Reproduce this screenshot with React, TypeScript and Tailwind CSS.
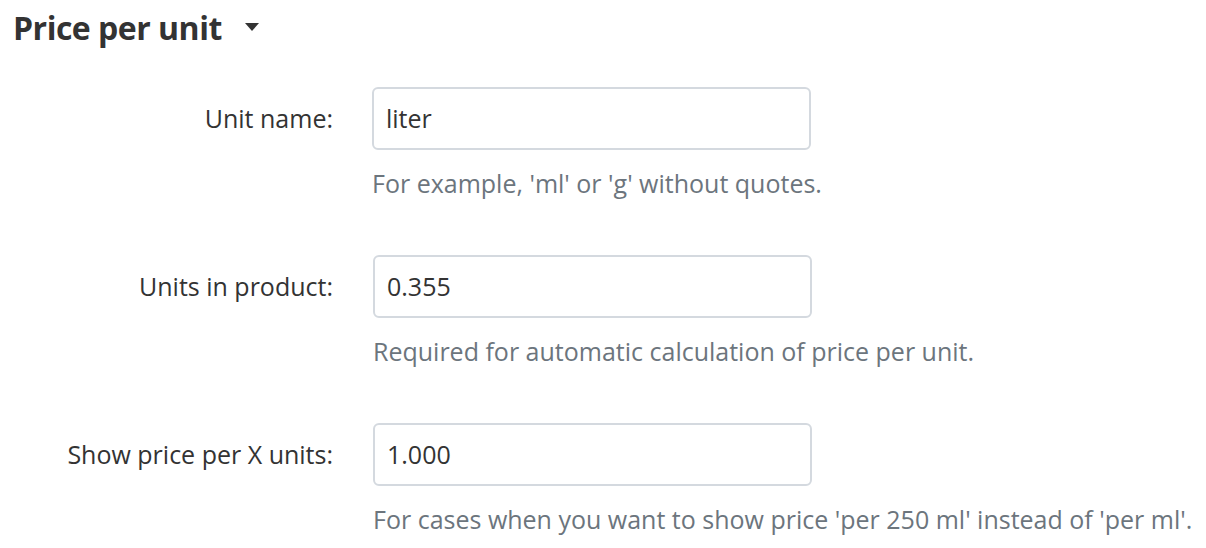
import React from "react";

const rows = [
  { label: "Unit name:", value: "liter", help: "For example, 'ml' or 'g' without quotes." },
  { label: "Units in product:", value: "0.355", help: "Required for automatic calculation of price per unit." },
  { label: "Show price per X units:", value: "1.000", help: "For cases when you want to show price 'per 250 ml' instead of 'per ml'." },
];

export default function App() {
  return (
    <div className="w-[1206px] h-[548px] bg-white overflow-hidden" style={{ fontFamily: "'Open Sans', 'Noto Sans', sans-serif" }}>
      <div className="pl-[13px] pt-[10px] flex items-center h-[46px]">
        <h2 className="text-[32px] leading-[44px] font-bold text-[#333333] tracking-[-0.5px]">Price per unit</h2>
        <svg className="ml-[23px] -mt-[2px]" width="14" height="8" viewBox="0 0 14 8">
          <path d="M0 0 L14 0 L7 8 Z" fill="#333333" />
        </svg>
      </div>
      <div className="mt-[41px] flex flex-col gap-[55px]">
        {rows.map((r, i) => (
          <div key={r.label} className="flex">
            <div className="w-[333px] text-right text-[25px] leading-[63px] text-[#333333]">{r.label}</div>
            <div className={`${i === 0 ? "ml-[39px]" : "ml-[40px]"} flex flex-col`}>
              <div className="w-[439px] h-[63px] border-2 border-[#d4d9df] rounded-[6px] flex items-center px-[12px] text-[25px] text-[#333333]">
                {r.value}
              </div>
              <div className="mt-[16px] text-[25px] leading-[34px] text-[#6c757d] whitespace-nowrap">{r.help}</div>
            </div>
          </div>
        ))}
      </div>
    </div>
  );
}
